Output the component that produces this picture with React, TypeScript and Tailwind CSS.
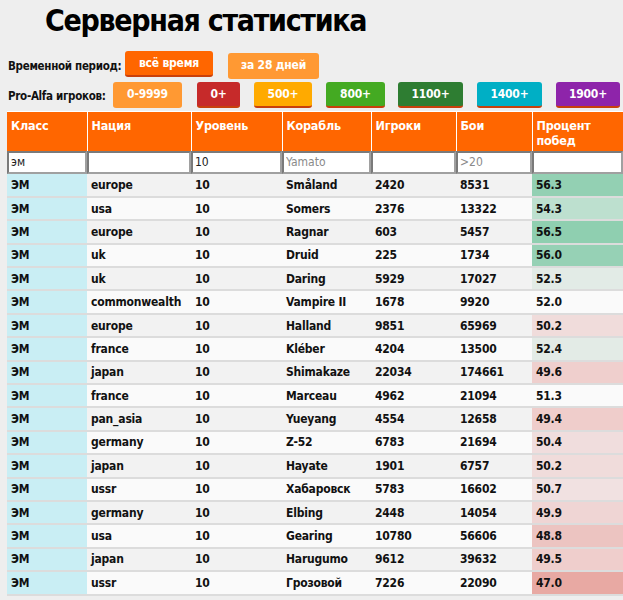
import React from 'react'

type Row = {
  nation: string
  ship: string
  players: number
  battles: number
  wr: string
  wrBg: string
}

const rows: Row[] = [
  { nation: 'europe', ship: 'Småland', players: 2420, battles: 8531, wr: '56.3', wrBg: 'bg-[#93d0b3]' },
  { nation: 'usa', ship: 'Somers', players: 2376, battles: 13322, wr: '54.3', wrBg: 'bg-[#bde0cf]' },
  { nation: 'europe', ship: 'Ragnar', players: 603, battles: 5457, wr: '56.5', wrBg: 'bg-[#8fcfb0]' },
  { nation: 'uk', ship: 'Druid', players: 225, battles: 1734, wr: '56.0', wrBg: 'bg-[#96d1b5]' },
  { nation: 'uk', ship: 'Daring', players: 5929, battles: 17027, wr: '52.5', wrBg: 'bg-[#e2ebe6]' },
  { nation: 'commonwealth', ship: 'Vampire II', players: 1678, battles: 9920, wr: '52.0', wrBg: '' },
  { nation: 'europe', ship: 'Halland', players: 9851, battles: 65969, wr: '50.2', wrBg: 'bg-[#f0dcdb]' },
  { nation: 'france', ship: 'Kléber', players: 4204, battles: 13500, wr: '52.4', wrBg: 'bg-[#e3ebe6]' },
  { nation: 'japan', ship: 'Shimakaze', players: 22034, battles: 174661, wr: '49.6', wrBg: 'bg-[#efcfcd]' },
  { nation: 'france', ship: 'Marceau', players: 4962, battles: 21094, wr: '51.3', wrBg: '' },
  { nation: 'pan_asia', ship: 'Yueyang', players: 4554, battles: 12658, wr: '49.4', wrBg: 'bg-[#efcdcb]' },
  { nation: 'germany', ship: 'Z-52', players: 6783, battles: 21694, wr: '50.4', wrBg: 'bg-[#f0dddd]' },
  { nation: 'japan', ship: 'Hayate', players: 1901, battles: 6757, wr: '50.2', wrBg: 'bg-[#f0dcdb]' },
  { nation: 'ussr', ship: 'Хабаровск', players: 5783, battles: 16602, wr: '50.7', wrBg: 'bg-[#f1e1e1]' },
  { nation: 'germany', ship: 'Elbing', players: 2448, battles: 14054, wr: '49.9', wrBg: 'bg-[#efd5d4]' },
  { nation: 'usa', ship: 'Gearing', players: 10780, battles: 56606, wr: '48.8', wrBg: 'bg-[#ecc4c1]' },
  { nation: 'japan', ship: 'Harugumo', players: 9612, battles: 39632, wr: '49.5', wrBg: 'bg-[#efcecc]' },
  { nation: 'ussr', ship: 'Грозовой', players: 7226, battles: 22090, wr: '47.0', wrBg: 'bg-[#e8a9a3]' },
]

const filters = [
  { value: 'эм', placeholder: '' },
  { value: '', placeholder: '' },
  { value: '10', placeholder: '' },
  { value: '', placeholder: 'Yamato' },
  { value: '', placeholder: '' },
  { value: '', placeholder: '>20' },
  { value: '', placeholder: '' },
]

const btn =
  'h-[26px] rounded-[3px] border-b-2 border-[#c8400c] text-white font-bold text-[12px] tracking-[-0.2px] flex items-center justify-center'

export default function App() {
  return (
    <div className="min-h-[600px] w-[623px] overflow-hidden bg-[#eeeeee] font-['DejaVu_Sans_Condensed','DejaVu_Sans',sans-serif] font-stretch-condensed text-[#111]">
      <h1 className="pl-[45px] pt-[2px] h-[44px] text-[30px] leading-[38px] font-bold tracking-[-1.3px] text-black">
        Серверная статистика
      </h1>

      <div className="flex items-start pl-[8px] h-[36px] pt-[7px]">
        <span className="text-[11.5px] font-bold mt-[7px] w-[117px] whitespace-nowrap tracking-[-0.3px]">
          Временной период:
        </span>
        <button className={`${btn} w-[88px] bg-[#ff6600]`}>всё время</button>
        <button className={`${btn} w-[91px] ml-[15px] mt-[2px] bg-[#ff9933] border-[#ff9933]`}>
          за 28 дней
        </button>
      </div>

      <div className="flex items-start pl-[8px] h-[31px] pt-[2px]">
        <span className="text-[11.5px] font-bold mt-[6px] w-[105px] whitespace-nowrap tracking-[-0.3px]">
          Pro-Alfa игроков:
        </span>
        <button className={`${btn} w-[69px] bg-[#ff9933] border-[#ff9933]`}>0-9999</button>
        <button className={`${btn} w-[43px] ml-[15px] bg-[#c62a2a]`}>0+</button>
        <button className={`${btn} w-[58px] ml-[14px] bg-[#ffaa00]`}>500+</button>
        <button className={`${btn} w-[59px] ml-[14px] bg-[#44aa22]`}>800+</button>
        <button className={`${btn} w-[65px] ml-[13px] bg-[#2e7d32]`}>1100+</button>
        <button className={`${btn} w-[65px] ml-[14px] bg-[#00afc5]`}>1400+</button>
        <button className={`${btn} w-[64px] ml-[14px] bg-[#8e24aa]`}>1900+</button>
      </div>

      <table className="ml-[7px] table-fixed border-collapse text-[12px] tracking-[-0.2px]">
        <colgroup>
          <col className="w-[80px]" />
          <col className="w-[104px]" />
          <col className="w-[91px]" />
          <col className="w-[89px]" />
          <col className="w-[85px]" />
          <col className="w-[76px]" />
          <col className="w-[91px]" />
        </colgroup>
        <thead>
          <tr className="bg-[#ff6600] text-white h-[39px] border-t border-white">
            {['Класс', 'Нация', 'Уровень', 'Корабль', 'Игроки', 'Бои', 'Процент побед'].map((h) => (
              <th
                key={h}
                className="border-l border-white first:border-l-0 align-top text-left font-bold text-[12.5px] px-[4px] pt-[6px] leading-[15px]"
              >
                {h}
              </th>
            ))}
          </tr>
          <tr className="h-[23px]">
            {filters.map((f, i) => (
              <th key={i} className="p-0">
                <input
                  readOnly
                  value={f.value}
                  placeholder={f.placeholder}
                  className="w-full h-[23px] bg-white border-2 border-t-[#7a7a7a] border-l-[#7a7a7a] border-r-[#a0a0a0] border-b-[#a0a0a0] px-[2px] text-[12px] font-normal font-['DejaVu_Sans',sans-serif] tracking-normal text-[#222] placeholder:text-[#8a8a8a] outline-none"
                />
              </th>
            ))}
          </tr>
        </thead>
        <tbody className="font-bold">
          {rows.map((r, i) => (
            <tr
              key={i}
              className={`h-[23.4px] border-b-2 border-[#dcdcdc] ${i % 2 === 0 ? 'bg-[#f2f2f2]' : 'bg-[#fafafa]'}`}
            >
              <td className="bg-[#c9eef4] px-[4px]">ЭМ</td>
              <td className="px-[4px]">{r.nation}</td>
              <td className="px-[4px]">10</td>
              <td className="px-[4px]">{r.ship}</td>
              <td className="px-[4px]">{r.players}</td>
              <td className="px-[4px]">{r.battles}</td>
              <td className={`px-[4px] ${r.wrBg}`}>{r.wr}</td>
            </tr>
          ))}
        </tbody>
      </table>
    </div>
  )
}
